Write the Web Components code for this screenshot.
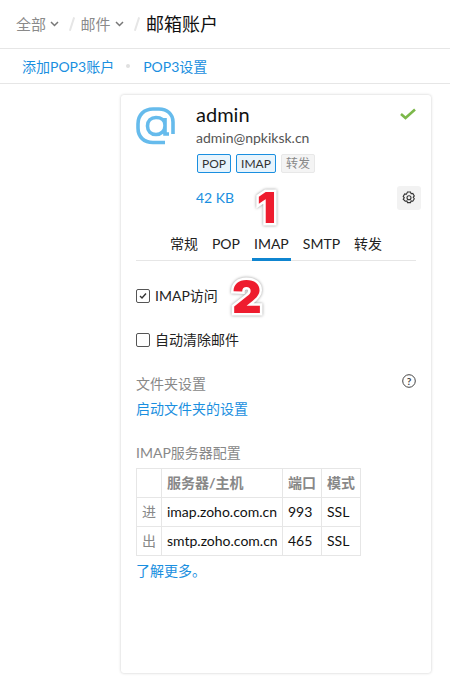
<!DOCTYPE html>
<html lang="zh"><head><meta charset="utf-8"><title>邮箱账户</title>
<style>
html,body{margin:0;padding:0;background:#fff;height:677px;overflow:hidden}
body{font:14px/20px Lato,"Noto Sans CJK SC",sans-serif;color:#111}
</style></head><body>
<app-crumbs></app-crumbs>
<app-subnav></app-subnav>
<account-card></account-card>
<script>
const F='Lato,"Noto Sans CJK SC",sans-serif';
function def(name,html){customElements.define(name,class extends HTMLElement{constructor(){super();this.attachShadow({mode:'open'}).innerHTML=html}})}
const chev='<svg width="9" height="6" viewBox="0 0 9 6" fill="none" stroke="#777" stroke-width="1.5"><path d="M1 1l3.500 3.500L8 1"/></svg>';
def('app-crumbs',`<style>
:host{display:flex;align-items:center;height:48px;border-bottom:1px solid #e6e6e6;padding-left:16px;font-family:${F};box-sizing:content-box}
.c{font-size:15px;color:#8a8a8a;display:flex;align-items:center;gap:4px}
.s{width:1.5px;height:14px;background:#e6e6e6;transform:rotate(18deg);margin:0 8px 0 12px}
.t{font-size:18px;color:#111;margin-left:1px}
</style><span class="c">全部${chev}</span><i class="s"></i><span class="c">邮件${chev}</span><i class="s"></i><span class="t">邮箱账户</span>`);
def('app-subnav',`<style>
:host{display:flex;align-items:center;height:34px;border-bottom:1px solid #e6e6e6;padding-left:22px;font:14px ${F};color:#1a8fe0}
i{width:4px;height:4px;border-radius:50%;background:#e0e0e0;margin:0 13px 0 12px}
</style><span>添加POP3账户</span><i></i><span>POP3设置</span>`);
def('tag-pill',`<style>
:host{display:inline-flex;align-items:center;height:17px;padding:0 4px;font-size:12px;border:1px solid #1a8fe0;border-radius:2px;background:#e8f4fc;color:#333}
:host([off]){border-color:#e8e8e8;background:#f4f4f4;color:#888}
</style><slot></slot>`);
def('num-mark',`<style>
:host{position:absolute;font:900 42px/42px Inter,Roboto,sans-serif;color:#ee1c2e;-webkit-text-stroke:5px #fff;paint-order:stroke fill;filter:drop-shadow(0 0 1.5px #999)}
</style><slot></slot>`);
def('check-row',`<style>
:host{display:flex;align-items:center;gap:5px;font-size:14px;color:#222}
.b{width:12px;height:12px;border:1px solid #555;border-radius:2px;display:flex;margin-bottom:1px}
</style><span class="b"><slot name="mark"></slot></span><slot></slot>`);
def('server-table',`<style>
:host{display:block;font-size:14px}
table{border-collapse:collapse;color:#111;table-layout:fixed;width:224px}
td,th{border:1px solid #e6e6e6;height:29px;padding:0 0 0 5px;text-align:left;box-sizing:border-box;white-space:nowrap}
th{color:#888;font-weight:700}
.k{color:#888;text-align:center;padding:0}
</style><table><colgroup><col style="width:25px"><col style="width:121px"><col style="width:39px"><col style="width:39px"></colgroup><tr><th></th><th>服务器/主机</th><th>端口</th><th>模式</th></tr>
<tr><td class="k">进</td><td>imap.zoho.com.cn</td><td>993</td><td>SSL</td></tr>
<tr><td class="k">出</td><td>smtp.zoho.com.cn</td><td>465</td><td>SSL</td></tr></table>`);
def('account-card',`<style>
:host{display:block;position:absolute;left:121px;top:95px;width:310px;height:578px;background:#fff;border-radius:3px;box-shadow:0 0 3px rgba(0,0,0,.22);font-family:${F};box-sizing:border-box;padding:0 15px}
.head{display:flex;padding-top:6px;gap:20px}
.at{flex:none;margin-top:5px}
.info{flex:1;position:relative}
.name{font-size:20px;line-height:26px;color:#111}
.mail{font-size:14px;line-height:20px;color:#555;margin-top:1px}
.tags{display:flex;gap:5px;margin:6px 0 0 1px}
.ok{position:absolute;right:0;top:7px}
.q{display:flex;align-items:center;justify-content:space-between;margin:13px -5px 0 60px;height:24px;color:#1a8fe0;font-size:14px}
.gear{width:24px;height:24px;background:#f2f2f2;border-radius:3px;display:flex;align-items:center;justify-content:center}
.tabs{display:flex;justify-content:center;gap:14px;height:30px;border-bottom:1px solid #e6e6e6;margin-top:20px;font-size:14px;color:#222;line-height:27px}
.tabs span{height:30px;box-sizing:border-box}
.tabs .on{border-bottom:3px solid #0f85d0;margin:0 -2px;padding:0 2px;height:31px}
.chk{margin-top:25px}
.chk2{margin-top:24px}
.sec{display:flex;justify-content:space-between;color:#888;margin-top:24px;line-height:20px}
.a{color:#1a8fe0;display:block;line-height:20px}
.h2{color:#888;margin-top:24px;margin-bottom:5px;line-height:20px}
</style>
<div class="head">
<svg class="at" width="40" height="40" viewBox="0 0 40 40" fill="none" stroke="#66bbec" stroke-width="3.600"><path d="M37 28V16C37 8 31 3 23 3H17C8 3 2 9 2 18V22C2 31 8 36.500 17 36.500H29"/><path d="M29 12V28H33M29 19C29 14 25 11.500 20 11.500C15 11.500 11.500 15 11.500 20C11.500 25 15 28.500 20 28.500C25 28.500 29 25 29 20"/></svg>
<div class="info">
<div class="name">admin</div><div class="mail">admin@npkiksk.cn</div>
<div class="tags"><tag-pill>POP</tag-pill><tag-pill>IMAP</tag-pill><tag-pill off>转发</tag-pill></div>
<svg class="ok" width="16" height="12" viewBox="0 0 16 12" fill="none" stroke="#7cb84a" stroke-width="2.600"><path d="M1 6l4.500 4L15 1.500"/></svg>
</div></div>
<div class="q"><span>42 KB</span><span class="gear"><svg width="14" height="14" viewBox="0 0 14 14" fill="none" stroke="#333" stroke-width="1.100"><path d="M5.500 1h3l.6 1.700 1.700-.3 1.500 2.500-1.100 1.400 1.100 1.400-1.500 2.500-1.700-.3-.6 1.700h-3l-.6-1.700-1.700.3L1.200 8.200 2.300 6.800 1.200 5.400l1.500-2.500 1.700.3z"/><circle cx="7" cy="6.800" r="2"/></svg></span></div>
<div class="tabs"><span>常规</span><span>POP</span><span class="on">IMAP</span><span>SMTP</span><span>转发</span></div>
<check-row class="chk"><svg slot="mark" viewBox="0 0 12 12" fill="none" stroke="#333" stroke-width="1.400"><path d="M3 6l2 2 4-4.500"/></svg>IMAP访问</check-row>
<check-row class="chk2">自动清除邮件</check-row>
<div class="sec"><span>文件夹设置</span><svg width="14" height="14" viewBox="0 0 14 14"><circle cx="7" cy="7" r="6.300" fill="none" stroke="#444"/><text x="7" y="10.500" text-anchor="middle" font-size="10" font-weight="700" fill="#444">?</text></svg></div>
<span class="a" style="margin-top:5px">启动文件夹的设置</span>
<div class="h2">IMAP服务器配置</div>
<server-table></server-table>
<span class="a" style="margin-top:5px">了解更多。</span>
<num-mark style="left:136px;top:92px">1</num-mark>
<num-mark style="left:111px;top:178px;font-size:46px;line-height:46px">2</num-mark>`);
</script>
</body></html>
